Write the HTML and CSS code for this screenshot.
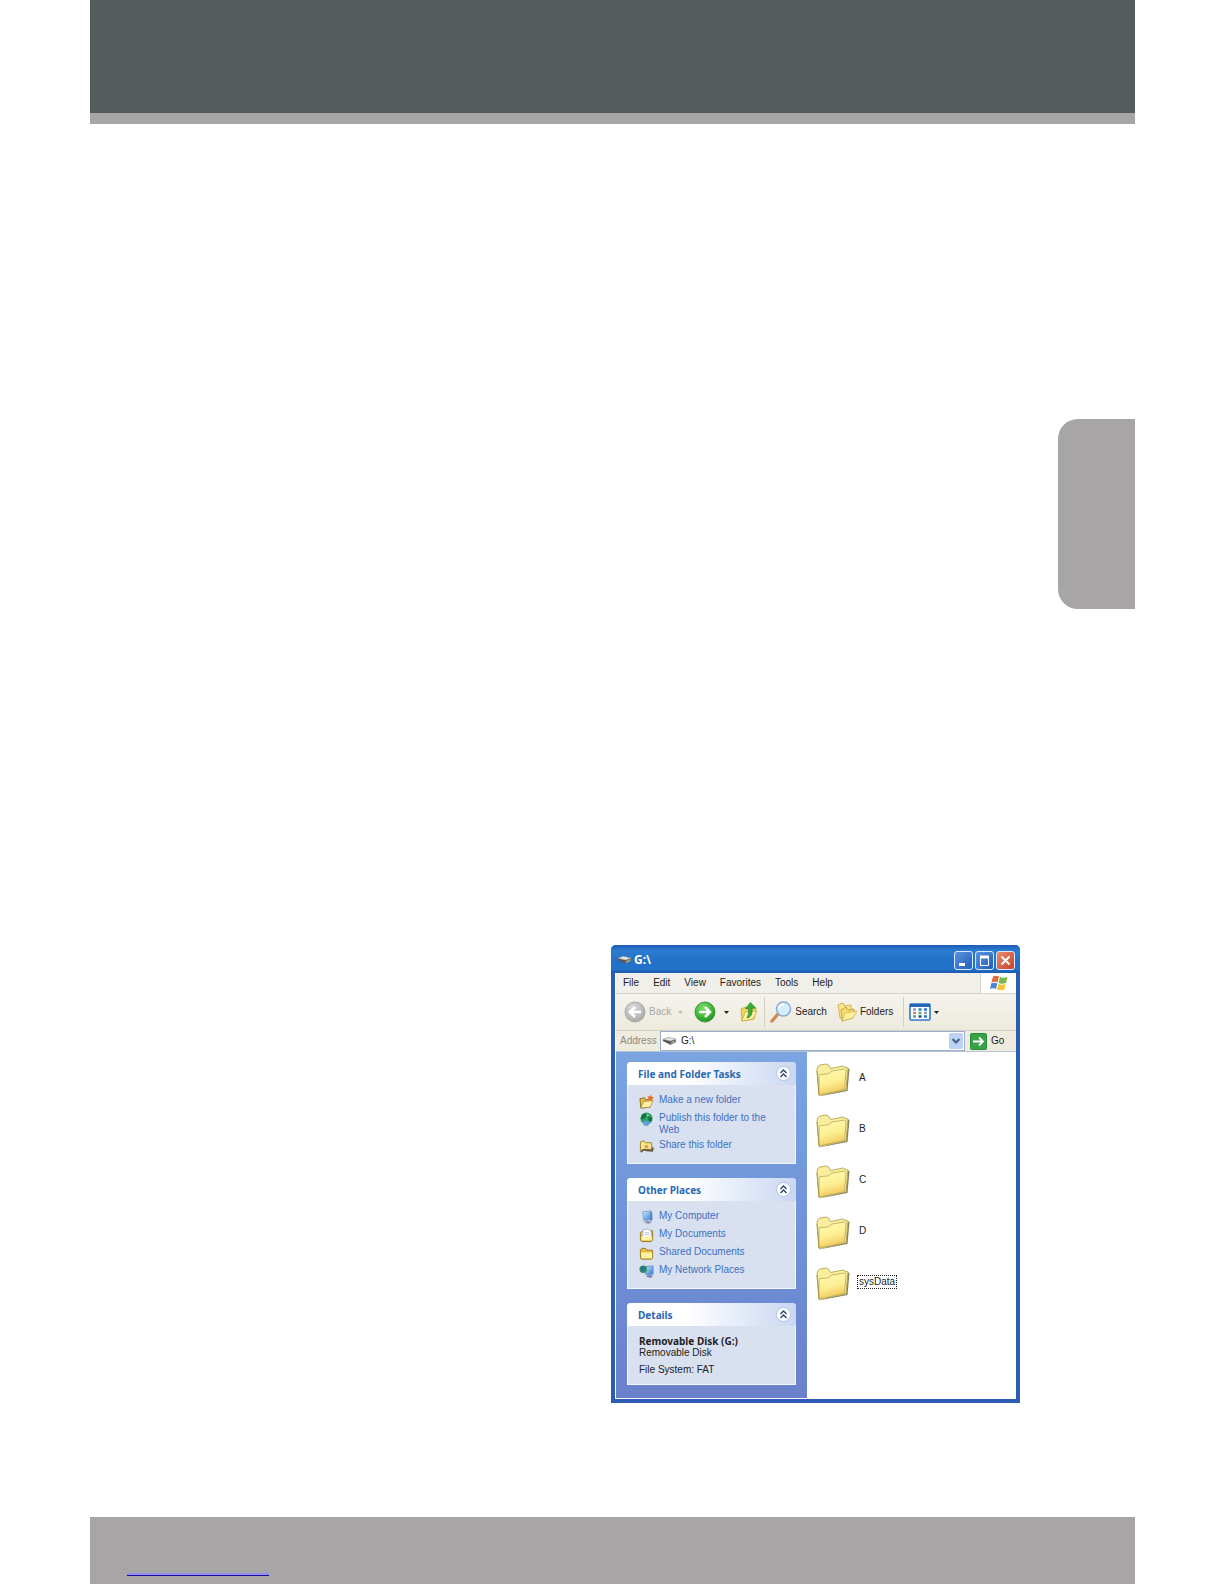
FILE: index.html
```
<!DOCTYPE html>
<html lang="en">
<head>
    <meta charset="UTF-8">
    <meta name="viewport" content="width=device-width, initial-scale=1.0">
    <title>G:\</title>
    <link rel="stylesheet" href="styles.css">
</head>
<body>
    <!-- shared icons -->
    <svg class="sprite" aria-hidden="true">
        <defs>
            <linearGradient id="gFolder" x1="0" y1="0" x2="0.3" y2="1">
                <stop offset="0" stop-color="#fffbb4"/>
                <stop offset="0.6" stop-color="#fdee92"/>
                <stop offset="1" stop-color="#f3c95c"/>
            </linearGradient>
            <radialGradient id="gGreen" cx="0.4" cy="0.3" r="0.8">
                <stop offset="0" stop-color="#7fdc6c"/>
                <stop offset="0.6" stop-color="#3cb235"/>
                <stop offset="1" stop-color="#1e8424"/>
            </radialGradient>
            <radialGradient id="gGrey" cx="0.4" cy="0.3" r="0.8">
                <stop offset="0" stop-color="#dedede"/>
                <stop offset="1" stop-color="#a3a3a3"/>
            </radialGradient>
            <linearGradient id="gScreen" x1="0" y1="0" x2="1" y2="1">
                <stop offset="0" stop-color="#d5f1fc"/>
                <stop offset="1" stop-color="#2878cf"/>
            </linearGradient>
        </defs>
        <symbol id="folder" viewBox="0 0 34 34">
            <path d="M2.5 33.5 L31.5 28 L33.5 6 L31 5 L29 26z" fill="#85805c"/>
            <path d="M1 7 Q1 3 4 2 L10 1 Q13 1 14.5 5.5 L27 3 L29 4 L32 5 L30 27 L3 32.5z" fill="#f9ee9c" stroke="#b5a65c" stroke-width="0.9"/>
            <path d="M3 13 Q3 11.5 5 11.5 L12 11 L16 8 L28.500 6 Q30 6 30 8 L28.500 26.500 L3 32z" fill="url(#gFolder)" stroke="#b9a85c" stroke-width="0.8"/>
            <path d="M1 8 L3 32" stroke="#a89348" stroke-width="0.8"/>
        </symbol>
        <symbol id="disk" viewBox="0 0 16 10">
            <path d="M1 3 L7 1 L15 3 L15 6 L9 9 L1 5z" fill="#555"/>
            <path d="M1 3 L7 1 L15 3 L9 5z" fill="#e4e4e4" stroke="#a2a2a2" stroke-width="0.5"/>
            <path d="M9 6 L15 4 V6 L9 9z" fill="#888"/>
            <path d="M11 6.5 L13 5.7" stroke="#8fe07a"/>
        </symbol>
        <symbol id="collapse" viewBox="0 0 15 15">
            <circle cx="7.5" cy="7.5" r="7" fill="#fff" stroke="#b4c1df"/>
            <path d="M4.5 7 L7.5 4 L10.5 7 M4.5 11 L7.5 8 L10.5 11" fill="none" stroke="#26417f" stroke-width="1.4"/>
        </symbol>
        <symbol id="small-folder" viewBox="0 0 16 16">
            <path d="M1.5 13 V4 L3 2.5 H7 L8.5 4.5 H14.5 V13 L13.5 14 H2.5z" fill="#e7bd45" stroke="#9a7520"/>
            <path d="M2 7 H14 V13 H2.5z" fill="#fff2a3"/>
        </symbol>
    </svg>

    <div class="sheet">
        <header class="sheet-header"></header>

        <main class="sheet-body">
            <div class="side-tab"></div>

            <section class="window" aria-label="G:\">
                <div class="title-bar">
                    <svg class="title-icon"><use href="#disk"/></svg>
                    <h1>G:\</h1>
                    <button type="button" class="win-btn" aria-label="Minimize">
                        <svg viewBox="0 0 17 17"><path d="M4 12.5 H10" stroke="#fff" stroke-width="3"/></svg>
                    </button>
                    <button type="button" class="win-btn" aria-label="Maximize">
                        <svg viewBox="0 0 17 17"><path d="M4.5 5 V13.5 H12.5 V5" fill="none" stroke="#fff"/><path d="M4 5 H13" stroke="#fff" stroke-width="3"/></svg>
                    </button>
                    <button type="button" class="win-btn close" aria-label="Close">
                        <svg viewBox="0 0 17 17"><path d="M4.5 4.5 L12.5 12.5 M12.5 4.5 L4.5 12.5" stroke="#fff" stroke-width="2"/></svg>
                    </button>
                </div>

                <div class="menu-bar">
                    <nav class="menu">
                        <button type="button">File</button>
                        <button type="button">Edit</button>
                        <button type="button">View</button>
                        <button type="button">Favorites</button>
                        <button type="button">Tools</button>
                        <button type="button">Help</button>
                    </nav>
                    <div class="flag">
                        <svg viewBox="0 0 18 16">
                            <path d="M3 1.5 Q6 0 9 1.5 L7.5 7.5 Q5 6 1.5 7.2z" fill="#e36a3c"/>
                            <path d="M10 2 Q13 3.6 17.5 2 L16 8 Q12 9.5 8.5 8z" fill="#76b944"/>
                            <path d="M1.2 8.2 Q4.5 7 7.3 8.5 L6 14 Q3 12.6 0 14z" fill="#4a86d6"/>
                            <path d="M8.3 9 Q12 10.4 15.7 9 L14.3 14.7 Q10.5 16 7 14.5z" fill="#f3c43a"/>
                        </svg>
                    </div>
                </div>

                <div class="toolbar">
                    <button type="button" class="tool back" disabled>
                        <svg class="round" viewBox="0 0 22 22"><circle cx="11" cy="11" r="10" fill="url(#gGrey)" stroke="#a8a8a8"/><path d="M17 11 H6 M11 6 L6 11 L11 16" fill="none" stroke="#fff" stroke-width="2.6"/></svg>
                        Back
                        <svg class="arrow" viewBox="0 0 5 3"><path d="M0 0 H5 L2.5 3z" fill="#bdbbb0"/></svg>
                    </button>
                    <button type="button" class="tool forward" aria-label="Forward">
                        <svg class="round" viewBox="0 0 22 22"><circle cx="11" cy="11" r="10" fill="url(#gGreen)" stroke="#3f9a3b"/><path d="M5 11 H16 M11 6 L16 11 L11 16" fill="none" stroke="#fff" stroke-width="2.6"/></svg>
                        <svg class="arrow" viewBox="0 0 5 3"><path d="M0 0 H5 L2.5 3z" fill="#222"/></svg>
                    </button>
                    <button type="button" class="tool up" aria-label="Up">
                        <svg class="icon" viewBox="0 0 20 20">
                            <path d="M2 7 L7 5 L9 7 L17 6 L15 17 L3 19z" fill="#f0d65c" stroke="#c9ae45"/>
                            <path d="M3 19 L6 10 L18 9 L14 17z" fill="#fff2a0" stroke="#c4a83e" stroke-width="0.7"/>
                            <path d="M8 16 Q14 15 13 6 H16.5 L11.5 0.5 L6.5 6.5 H9.500 Q10.500 12 8 16z" fill="#3fae37" stroke="#2b8c2b" stroke-width="0.8"/>
                        </svg>
                    </button>
                    <span class="divider"></span>
                    <button type="button" class="tool search">
                        <svg class="round" viewBox="0 0 22 22">
                            <path d="M2 20 L8 13" stroke="#d08a58" stroke-width="3.4" stroke-linecap="round"/>
                            <circle cx="13.5" cy="8" r="7" fill="#d3effb" stroke="#8aa9d3" stroke-width="1.4"/>
                            <path d="M9 7 Q10 3.5 14 3.5" fill="none" stroke="#fff" stroke-width="2"/>
                        </svg>
                        Search
                    </button>
                    <button type="button" class="tool folders">
                        <svg class="icon" viewBox="0 0 20 20">
                            <path d="M1 3 L6 1 L8 4 L14 3 V14 L3 16z" fill="#f9e68a" stroke="#d3b45a"/>
                            <path d="M4 8 L9 5 L11 8 L17 7 L16 16 L5 19z" fill="#f5dc70" stroke="#c9a647"/>
                            <path d="M5 19 L8 11 L20 9 L16 16z" fill="#fff0a0" stroke="#cfae50" stroke-width="0.8"/>
                        </svg>
                        Folders
                    </button>
                    <span class="divider"></span>
                    <button type="button" class="tool views" aria-label="Views">
                        <svg class="round" viewBox="0 0 22 18">
                            <rect x="1" y="1" width="20" height="16" rx="1" fill="#fff" stroke="#2f77c5" stroke-width="1.6"/>
                            <path d="M1 2.500 H21" stroke="#2467bb" stroke-width="3"/>
                            <path d="M4 6.500 H7 M15 10 H18" stroke="#93a4b5" stroke-width="2.4"/>
                            <path d="M9.500 6.500 H12.500 M15 6.500 H18 M15 13.500 H18" stroke="#2d7fd0" stroke-width="2.4"/>
                            <path d="M4 10 H7" stroke="#d27c6a" stroke-width="2.4"/>
                            <path d="M9.500 10 H12.500 M4 13.500 H7" stroke="#68a77d" stroke-width="2.4"/>
                            <path d="M9.500 13.500 H12.500" stroke="#23486e" stroke-width="2.4"/>
                        </svg>
                        <svg class="arrow" viewBox="0 0 5 3"><path d="M0 0 H5 L2.5 3z" fill="#222"/></svg>
                    </button>
                </div>

                <div class="address-bar">
                    <label for="address">Address</label>
                    <div class="combo">
                        <svg class="disk"><use href="#disk"/></svg>
                        <select id="address">
                            <option>G:\</option>
                        </select>
                        <span class="drop"><svg viewBox="0 0 10 8"><path d="M1.5 2 L5 5.5 L8.5 2" fill="none" stroke="#45648f" stroke-width="2.2"/></svg></span>
                    </div>
                    <button type="button" class="go">
                        <svg viewBox="0 0 17 17"><rect x="0.5" y="0.5" width="16" height="16" rx="1" fill="#37a344" stroke="#2a8b39"/><path d="M3 8.5 H13 M9 4.5 L13 8.5 L9 12.5" fill="none" stroke="#fff" stroke-width="1.8"/></svg>
                        Go
                    </button>
                </div>

                <div class="content">
                    <aside class="sidebar">
                        <section class="panel">
                            <div class="panel-head">
                                <h2>File and Folder Tasks</h2>
                                <button type="button" aria-label="Collapse File and Folder Tasks"><svg><use href="#collapse"/></svg></button>
                            </div>
                            <ul class="links">
                                <li>
                                    <svg viewBox="0 0 16 16"><path d="M1 5 L6 4 L7 6 H13 L12 14 L2 15z" fill="#e8c04a" stroke="#8d6a22"/><path d="M2 15 L5 8 L15 7 L12 14z" fill="#fff1a5" stroke="#a07d2c" stroke-width="0.7"/><path d="M12.5 0.5 L13.5 3 L16 3.5 L14 5.5 L14 8 L11.5 6.5 L9 7 L10 4.5 L9 2 L11.5 2.6z" fill="#e8702d"/></svg>
                                    <a href="#">Make a new folder</a>
                                </li>
                                <li>
                                    <svg viewBox="0 0 16 16"><circle cx="8" cy="7" r="6.5" fill="#2ca269"/><path d="M3 4 Q7 0 8 3 L6 7 L2 8z M10 5 L14 6 L13 10 L10 9z" fill="#176c3f"/><path d="M4 10 Q9 8 13 11 L9 15 L5 14z" fill="#5c9fdb"/><path d="M8 2 L11 3 L9 5z" fill="#8adba2"/></svg>
                                    <a href="#">Publish this folder to the Web</a>
                                </li>
                                <li>
                                    <svg viewBox="0 0 16 16"><path d="M1.5 12 V3 L5.5 2 L7 4 H13.5 V11z" fill="#fae58b" stroke="#a3802c"/><circle cx="8" cy="8" r="2" fill="#d99e6a"/><path d="M2 14 Q5 10 8 12 L14 12.5 L15 9" fill="none" stroke="#685a3e" stroke-width="2"/></svg>
                                    <a href="#">Share this folder</a>
                                </li>
                            </ul>
                        </section>

                        <section class="panel">
                            <div class="panel-head">
                                <h2>Other Places</h2>
                                <button type="button" aria-label="Collapse Other Places"><svg><use href="#collapse"/></svg></button>
                            </div>
                            <ul class="links">
                                <li>
                                    <svg viewBox="0 0 16 16"><path d="M4 2 L13 1 L14 10 L5 11z" fill="url(#gScreen)" stroke="#7b9fcd"/><path d="M5 13 L9 11 L14 13 L10 15z" fill="#8f99b4"/><path d="M12 3 L14 2 V11 L12 12z" fill="#5d7fb9"/></svg>
                                    <a href="#">My Computer</a>
                                </li>
                                <li>
                                    <svg viewBox="0 0 16 16"><path d="M1.5 13 V5 L4 3 H14.5 V13 L13 14.5 H3z" fill="#e8c04a" stroke="#9a7520"/><path d="M4 2 L10 1 L13 4 V11 H4z" fill="#fff" stroke="#96a9c9" stroke-width="0.8"/><path d="M6 5 H11 M6 7 H11" stroke="#8fb0dc" stroke-width="0.8"/><path d="M2 9 H14 V13 H3z" fill="#fff2a3"/></svg>
                                    <a href="#">My Documents</a>
                                </li>
                                <li>
                                    <svg><use href="#small-folder"/></svg>
                                    <a href="#">Shared Documents</a>
                                </li>
                                <li>
                                    <svg viewBox="0 0 16 16"><path d="M6 3 L15 2 V11 L7 11z" fill="url(#gScreen)" stroke="#6a94ca"/><circle cx="4.5" cy="5.5" r="4" fill="#2f8f62"/><path d="M2 4 L5 2 L6 6 L3 8z" fill="#2c65b5"/><path d="M7 13 L11 11 L15 13 L12 15z" fill="#7688ad"/></svg>
                                    <a href="#">My Network Places</a>
                                </li>
                            </ul>
                        </section>

                        <section class="panel">
                            <div class="panel-head">
                                <h2>Details</h2>
                                <button type="button" aria-label="Collapse Details"><svg><use href="#collapse"/></svg></button>
                            </div>
                            <div class="details">
                                <strong>Removable Disk (G:)</strong>
                                <p>Removable Disk</p>
                                <p class="fs">File System: FAT</p>
                            </div>
                        </section>
                    </aside>

                    <ul class="files">
                        <li><svg><use href="#folder"/></svg><a href="#">A</a></li>
                        <li><svg><use href="#folder"/></svg><a href="#">B</a></li>
                        <li><svg><use href="#folder"/></svg><a href="#">C</a></li>
                        <li><svg><use href="#folder"/></svg><a href="#">D</a></li>
                        <li><svg><use href="#folder"/></svg><a href="#" class="focused">sysData</a></li>
                    </ul>
                </div>
            </section>
        </main>

        <footer class="sheet-footer">
            <a href="#" class="footer-link" aria-label="Website"></a>
        </footer>
    </div>
</body>
</html>
```
FILE: styles.css
```
* { box-sizing: border-box; }
body { margin: 0; background: #fff; font-family: "Liberation Sans", Arial, sans-serif; font-size: 10px; line-height: 12px; color: #222; }
h1, h2, p, ul { margin: 0; padding: 0; }
h1, h2, strong { font-family: "Noto Sans", sans-serif; }
ul { list-style: none; }
button { font: inherit; color: inherit; background: none; border: none; padding: 0; }
a { text-decoration: none; color: inherit; }
svg { display: block; flex: none; }
.sprite { position: absolute; width: 0; height: 0; }

/* printed sheet */
.sheet { display: flex; flex-direction: column; min-height: 100vh; margin: 0 89px 0 90px; }
.sheet-header { height: 124px; background: #565b5e; border-bottom: 11px solid #a7a5a6; }
.sheet-body { flex: 1; display: flex; flex-direction: column; }
.side-tab { align-self: flex-end; width: 77px; height: 190px; margin-top: 295px; background: #a7a5a6; border-radius: 20px 0 0 20px; }
.sheet-footer { height: 67px; padding: 56px 37px 0; background: #a7a5a6; }
.footer-link { display: block; width: 142px; height: 3px; border-top: 2px solid #928df0; border-bottom: 1px solid #1a0d96; }

/* explorer window */
.window { margin: 336px 115px 113px 521px; border: 4px solid #2c5cb5; border-top: none; border-radius: 5px 5px 0 0; background: #2c5cb5; }
.title-bar { display: flex; align-items: center; gap: 2px; height: 28px; margin: 0 -4px; padding: 2px 5px 0 6px; border-radius: 5px 5px 0 0; background: linear-gradient(#1c5cb5, #2d7cd3 20%, #2170c8 60%, #2473cb 85%, #1b5aae); }
.title-icon { width: 15px; height: 10px; }
.title-bar h1 { flex: 1; font-size: 12px; line-height: 14px; color: #fff; }
.win-btn { width: 19px; height: 19px; border: 1px solid #dbe8f8; border-radius: 3px; background: linear-gradient(135deg, #5b93de, #1f5fbd); }
.win-btn.close { background: linear-gradient(135deg, #ea8b6d, #c8422a); }
.win-btn svg { width: 17px; height: 17px; }

.menu-bar { display: flex; height: 21px; background: #f1efe9; border-bottom: 1px solid #d6d3c7; border-left: 1px solid #fff; }
.menu { flex: 1; display: flex; align-items: center; gap: 14px; padding-left: 7px; }
.flag { display: flex; align-items: center; justify-content: center; width: 36px; background: #fff; border-left: 1px solid #d6d3c7; }
.flag svg { width: 18px; height: 16px; }

.toolbar { display: flex; align-items: center; height: 37px; padding-left: 8px; background: linear-gradient(#f5f3ed, #edeadd); border-bottom: 1px solid #d3d0c1; border-left: 1px solid #fff; }
.tool { display: flex; align-items: center; gap: 3px; }
.round { width: 22px; height: 22px; }
.icon { width: 20px; height: 20px; }
.arrow { width: 5px; height: 3px; }
.back { color: #aaa89f; }
.back .arrow { margin-left: 4px; }
.forward { margin-left: 11px; gap: 8px; }
.up { margin-left: 10px; }
.divider { width: 1px; height: 30px; margin: 0 5px; background: #d3d0c1; }
.folders { margin: 0 5px 0 10px; }

.address-bar { display: flex; align-items: center; height: 20px; padding-left: 4px; background: #efecdf; border-left: 1px solid #fff; }
.address-bar label { width: 40px; color: #8b8981; }
.combo { flex: 1; display: flex; align-items: center; height: 20px; padding: 0 1px; background: #fff; border: 1px solid #9aafcb; }
.combo .disk { width: 15px; height: 10px; }
.combo select { flex: 1; min-width: 0; height: 16px; padding: 0 4px; font: inherit; color: #222; background: none; border: none; appearance: none; }
.drop { display: flex; align-items: center; justify-content: center; width: 14px; height: 16px; background: #bdd1f3; border-radius: 2px; }
.drop svg { width: 10px; height: 8px; }
.go { display: flex; align-items: center; gap: 4px; width: 51px; padding-left: 5px; }
.go svg { width: 17px; height: 17px; }

.content { display: flex; background: #fff; border: 1px solid #fff; border-top-color: #b7c3d8; border-right: none; }
.sidebar { flex: none; width: 191px; padding: 10px 11px 13px; display: flex; flex-direction: column; gap: 14px; background: linear-gradient(#7aa5e1, #6f93d8 50%, #6a80ca); }
.panel { background: #d9e1f1; border: 1px solid #f2f6fd; border-top: none; border-radius: 4px 4px 0 0; }
.panel-head { display: flex; align-items: center; justify-content: space-between; height: 23px; margin: 0 -1px; padding: 0 5px 0 11px; border-radius: 4px 4px 0 0; background: linear-gradient(90deg, #fff 35%, #c9d7f2); }
.panel-head h2 { font-size: 10px; line-height: 14px; color: #2968b5; }
.panel-head svg { width: 15px; height: 15px; }
.links { display: flex; flex-direction: column; gap: 3px; padding: 9px 11px; color: #3f70bd; }
.links li { display: flex; align-items: flex-start; gap: 5px; min-height: 15px; }
.links svg { width: 15px; height: 15px; }
.links a { flex: 1; }
.details { padding: 9px 11px 8px; }
.details strong { display: block; }
.fs { padding-top: 5px; }

.files { flex: 1; padding: 11px 9px; }
.files li { display: flex; align-items: flex-start; gap: 8px; height: 51px; }
.files svg { width: 34px; height: 34px; }
.files a { margin-top: 9px; padding: 0 1px; }
.files .focused { outline: 1px dotted #222; }
```
